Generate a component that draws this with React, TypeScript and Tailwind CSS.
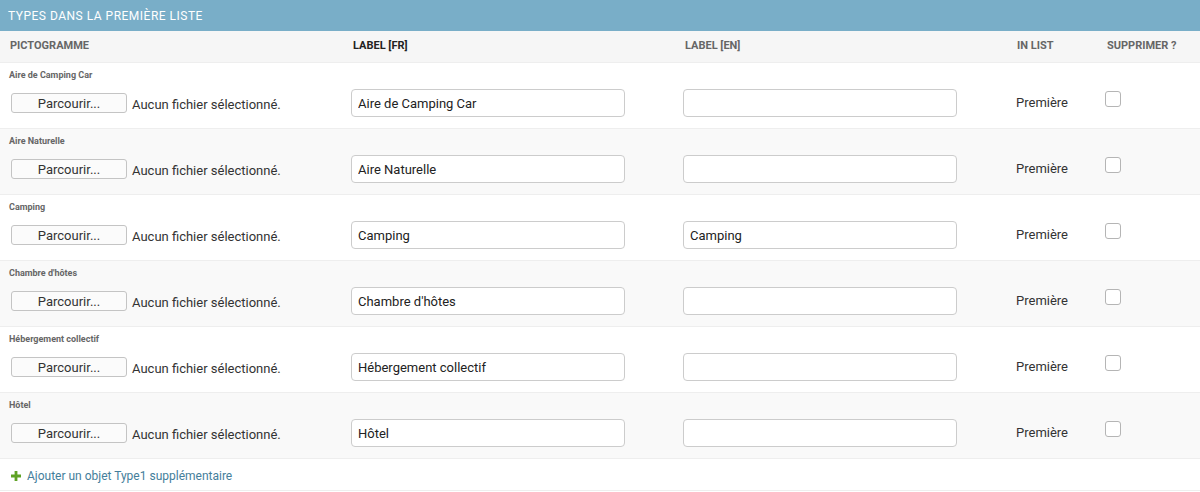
const rows = [
  { name: "Aire de Camping Car", fr: "Aire de Camping Car", en: "" },
  { name: "Aire Naturelle", fr: "Aire Naturelle", en: "" },
  { name: "Camping", fr: "Camping", en: "Camping" },
  { name: "Chambre d'hôtes", fr: "Chambre d'hôtes", en: "" },
  { name: "Hébergement collectif", fr: "Hébergement collectif", en: "" },
  { name: "Hôtel", fr: "Hôtel", en: "" },
];

const cols = "grid grid-cols-[343px_332px_332px_90px_1fr]";

function TextBox({ value }: { value: string }) {
  return (
    <input
      readOnly
      defaultValue={value}
      className="w-[274px] h-[28px] border border-[#ccc] rounded-[4px] bg-white pl-[6px] text-[13px] text-[#222] outline-none"
    />
  );
}

export default function App() {
  return (
    <div className="w-[1200px] h-[492px] bg-white font-['Roboto',sans-serif] text-[#333] overflow-hidden">
      {/* Title bar */}
      <div className="h-[31px] bg-[#79aec8] flex items-center pl-[8px] text-white text-[12px] tracking-[0.5px] uppercase">
        Types dans la première liste
      </div>

      {/* Column headings */}
      <div className={`${cols} h-[32px] items-center bg-[#f6f6f6] border-b border-[#eee] text-[11px] font-bold uppercase text-[#666]`}>
        <div className="pl-[10px]">Pictogramme</div>
        <div className="pl-[10px] text-[#222]">Label [FR]</div>
        <div className="pl-[10px]">Label [EN]</div>
        <div className="pl-[10px]">In list</div>
        <div className="pl-[10px]">Supprimer ?</div>
      </div>

      {/* Inline rows */}
      {rows.map((r, i) => (
        <div
          key={r.name}
          className={`pb-[11px] border-b border-[#eee] ${i % 2 === 1 ? "bg-[#f9f9f9]" : "bg-white"}`}
        >
          <div className="h-[26px] pt-[6px] pl-[9px] text-[9px] leading-[12px] font-bold text-[#666]">
            {r.name}
          </div>
          <div className={`${cols} h-[28px] items-center`}>
            <div className="flex items-center pl-[11px]">
              <div className="w-[116px] h-[20px] flex items-center justify-center pt-[1px] border border-[#c4c4c4] rounded-[3px] bg-[#fbfbfb] text-[13px] text-[#333]">
                Parcourir...
              </div>
              <span className="ml-[5px] mt-[3px] text-[13px] text-[#333]">Aucun fichier sélectionné.</span>
            </div>
            <div className="pl-[8px]">
              <TextBox value={r.fr} />
            </div>
            <div className="pl-[8px]">
              <TextBox value={r.en} />
            </div>
            <div className="pl-[9px] text-[13px] text-[#333]">Première</div>
            <div className="pl-[8px] self-start pt-[2px]">
              <div className="w-[16px] h-[16px] border border-[#b5b5b5] rounded-[3px] bg-white" />
            </div>
          </div>
        </div>
      ))}

      {/* Add another */}
      <div className="h-[32px] flex items-center pt-[2px] pl-[11px] border-b border-[#eee] text-[12px] text-[#447e9b]">
        <svg width="10" height="10" viewBox="0 0 10 10" className="mr-[6px]">
          <path d="M3.6 0h2.8v3.6H10v2.8H6.4V10H3.6V6.4H0V3.6h3.6z" fill="#5fa225" />
        </svg>
        Ajouter un objet Type1 supplémentaire
      </div>
    </div>
  );
}
